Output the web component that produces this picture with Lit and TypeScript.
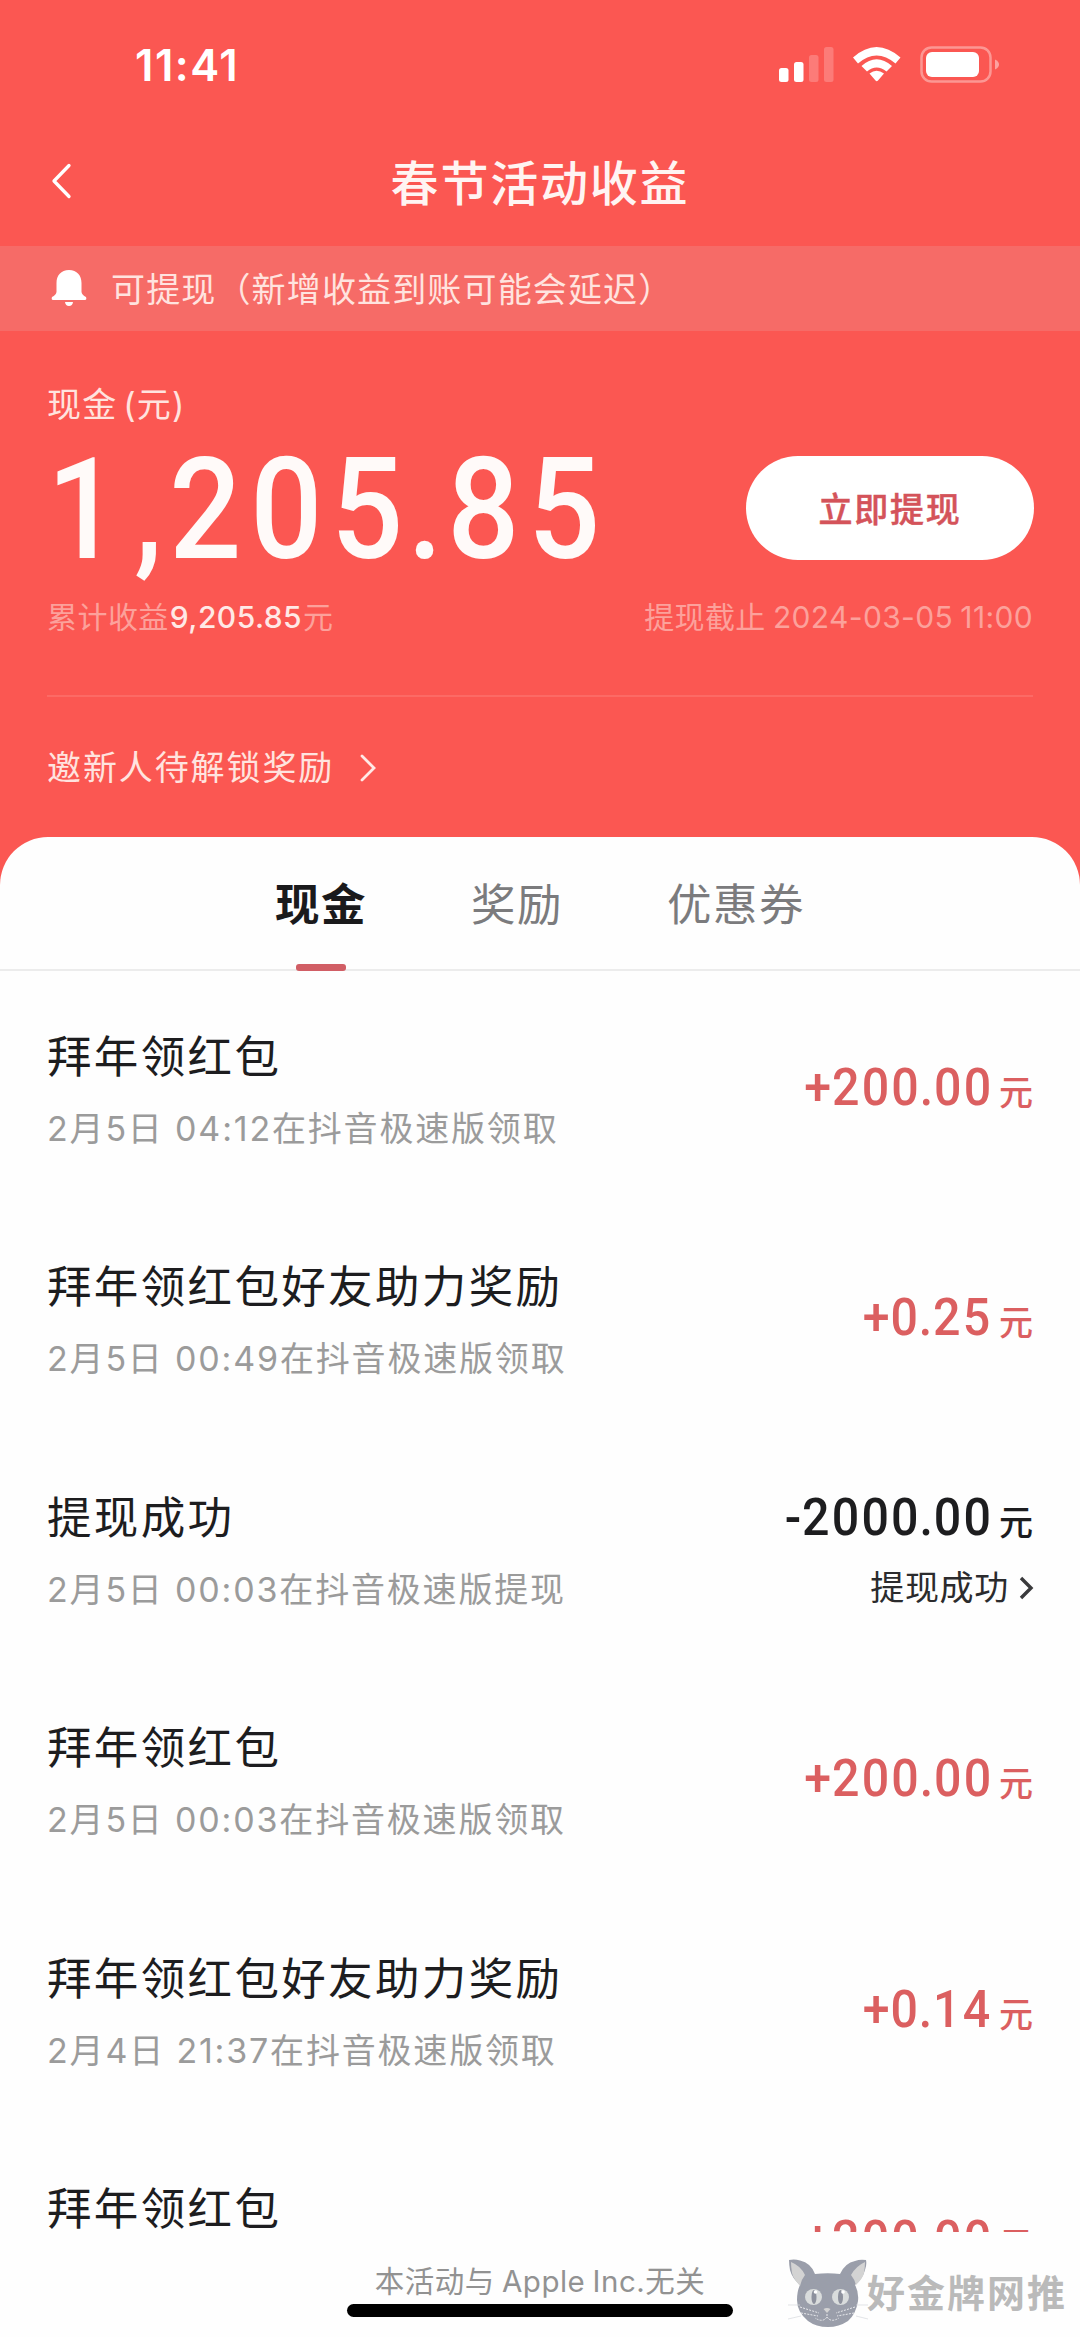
import { LitElement, html, css, svg, nothing } from "lit";
import { customElement, property } from "lit/decorators.js";

interface Entry {
  title: string;
  date: string;
  time: string;
  place: string;
  amount: string;
  status?: string;
}

const ENTRIES: Entry[] = [
  { title: "拜年领红包", date: "2月5日", time: "04:12", place: "在抖音极速版领取", amount: "+200.00" },
  { title: "拜年领红包好友助力奖励", date: "2月5日", time: "00:49", place: "在抖音极速版领取", amount: "+0.25" },
  { title: "提现成功", date: "2月5日", time: "00:03", place: "在抖音极速版提现", amount: "-2000.00", status: "提现成功" },
  { title: "拜年领红包", date: "2月5日", time: "00:03", place: "在抖音极速版领取", amount: "+200.00" },
  { title: "拜年领红包好友助力奖励", date: "2月4日", time: "21:37", place: "在抖音极速版领取", amount: "+0.14" },
  { title: "拜年领红包", date: "", time: "", place: "", amount: "+200.00" },
];

@customElement("status-bar")
export class StatusBar extends LitElement {
  static styles = css`
    :host { display: flex; justify-content: space-between; align-items: center; height: 131px; padding: 0 81px 2px 135px; box-sizing: border-box; }
    .time { font: 600 43.500px/50px Inter, sans-serif; letter-spacing: 1.500px; color: #fff; }
    .icons { display: block; width: 222px; height: 40px; }
  `;
  render() {
    return html`
      <span class="time">11:41</span>
      <svg class="icons" viewBox="776 44 222 40">
        <g fill="#fff">
          <rect x="778" y="67" width="9.5" height="14" rx="2.5" />
          <rect x="793" y="61" width="9.5" height="20" rx="2.5" />
          <rect x="808" y="54" width="9.5" height="27" rx="2.5" opacity=".22" />
          <rect x="823" y="46" width="9.5" height="35" rx="2.5" opacity=".22" />
          <path d="M852 56.5Q875.500 35.500 899.500 56.500L894.500 62.500Q875.500 46.500 857 62.500Z" />
          <path d="M860.500 65Q875.500 51.500 891 65L885.500 70.500Q875.500 62.500 866 70.500Z" />
          <path d="M868.500 72.500Q875.500 67 883 72.500L877 79.500Q875.700 81 874.500 79.500Z" />
          <rect x="925" y="51" width="53" height="25" rx="6" />
          <path d="M994 58.500Q998 60.500 998 63.500T994 68.500Z" opacity=".45" />
        </g>
        <rect x="920.500" y="46.500" width="69" height="34" rx="10" fill="none" stroke="#fff" stroke-width="2.500" opacity=".38" />
      </svg>
    `;
  }
}

@customElement("record-row")
export class RecordRow extends LitElement {
  @property({ attribute: false }) entry!: Entry;
  static styles = css`
    :host { display: flex; justify-content: space-between; height: 230.4px; padding: 0 47px 0 47px; box-sizing: border-box; font-family: Inter, "Noto Sans CJK SC", sans-serif; }
    .title { font-size: 44.500px; line-height: 60px; letter-spacing: 2.350px; color: #1d1d1f; margin-top: 56px; white-space: nowrap; }
    .sub { font-size: 34px; line-height: 48px; letter-spacing: 1.820px; color: #9b9b9b; margin-top: 18px; white-space: nowrap; }
    .side { display: flex; flex-direction: column; align-items: flex-end; padding-top: 87px; }
    .side.has-status { padding-top: 56px; }
    .sum { display: flex; align-items: baseline; gap: 6px; height: 60px; line-height: 60px; color: #db5f60; white-space: nowrap; }
    .has-status .sum { color: #1d1d1f; }
    .num { display: inline-block; font-family: Roboto, sans-serif; font-weight: 500; font-size: 52px; letter-spacing: 2.400px; transform: scaleX(.93); transform-origin: right; }
    .dot { margin: 0 -1.500px; }
    .sign { margin-right: -1.500px; }
    .unit { font-size: 34px; font-weight: 500; }
    .status { display: flex; align-items: center; gap: 9px; margin: 16px -1px 0 0; font-size: 34px; line-height: 48px; letter-spacing: .700px; color: #2b2b2d; }
    .chev { display: block; width: 16px; height: 26px; }
  `;
  render() {
    const e = this.entry;
    const [whole, cents] = e.amount.slice(1).split(".");
    return html`
      <div class="main">
        <div class="title">${e.title}</div>
        ${e.date ? html`<div class="sub">${e.date} ${e.time}${e.place}</div>` : nothing}
      </div>
      <div class="side ${e.status ? "has-status" : ""}">
        <div class="sum"><span class="num"><span class="sign">${e.amount[0]}</span>${whole}<span class="dot">.</span>${cents}</span><span class="unit">元</span></div>
        ${e.status
          ? html`<div class="status">${e.status}<svg class="chev" viewBox="0 0 16 26"><path d="M3 3L13 13L3 23" fill="none" stroke="#3a3a3c" stroke-width="3.400" /></svg></div>`
          : nothing}
      </div>
    `;
  }
}

const cat = svg`
  <path fill="#9a9eaa" d="M1 1Q7 0 12 1.500Q23 4 27 15Q40 13.500 52 15Q57 4 67 2Q72 0 78 1Q79 5 77 11Q75 19 67 26Q71 33 70 42Q68 55 60 62Q51 68 40 68Q28 68 20 62Q9 53 9 41Q9 32 12 26Q4 19 2 11Q1 5 1 1Z" />
  <path fill="#d3d3d3" d="M3 3Q13 7 17 16Q13 21 12 27Q5 19 4 14Q3 8 3 3ZM77 3Q68 7 63 16Q67 21 68 26Q75 19 76 14Q77 8 77 3Z" />
  <g fill="#d9dcdc"><ellipse cx="25.500" cy="38" rx="8.500" ry="8" /><ellipse cx="52.500" cy="38" rx="8.500" ry="8" /></g>
  <g fill="#8d919d"><ellipse cx="26" cy="38" rx="2.500" ry="7" /><ellipse cx="52.500" cy="38" rx="2.500" ry="7" /></g>
  <g fill="#fff"><circle cx="27.500" cy="33" r="1.800" /><circle cx="55" cy="33" r="1.800" /></g>
  <path fill="#d3d3d3" d="M35.500 50Q39 48 42.500 50L39 54Z" />
  <path fill="none" stroke="#e8e9ec" stroke-width="1" stroke-dasharray="2 1.200" d="M39 55V58Q35 64 27 59M39 58Q43 64 51 59M12 48L31 54M13 54L30 57M67 48L48 54M66 54L49 57" />
  <path fill="none" stroke="#d6d8dc" stroke-width=".700" d="M0 46H12M0 60L13 57M68 46H80M68 57L80 60" />
`;

@customElement("app-root")
export class AppRoot extends LitElement {
  static styles = css`
    :host { display: flex; flex-direction: column; position: relative; width: 1080px; height: 2337px; overflow: hidden; background: #fb5752; font-family: Inter, "Noto Sans CJK SC", sans-serif; }
    svg { display: block; }
    .nav { display: grid; grid-template-columns: 90px 1fr 90px; align-items: center; height: 106px; padding-bottom: 9px; }
    .back { width: 24px; height: 40px; margin: 0 0 6px 48px; }
    .title { text-align: center; font-size: 48px; font-weight: 500; line-height: 60px; letter-spacing: 1.800px; color: #fff4f2; }
    .notice { display: flex; align-items: center; height: 85px; padding: 0 0 2px 51px; box-sizing: border-box; gap: 24px; background: #f66b67; color: #ffe3df; font-size: 34px; letter-spacing: 1.150px; }
    .bell { width: 36px; height: 38px; }
    .hero { display: flex; flex-direction: column; height: 506px; padding: 0 47px 0 47px; box-sizing: border-box; }
    .label { margin-top: 50px; font-size: 34px; line-height: 48px; letter-spacing: 1.200px; word-spacing: -5px; color: #ffe3df; }
    .balance { display: flex; justify-content: space-between; align-items: center; height: 104px; margin-top: 27px; }
    .amount { font: 500 141px/104px Roboto, sans-serif; letter-spacing: 9.800px; color: #fffaf9; transform: scaleX(.9); transform-origin: left; padding-top: 4px; }
    .comma { margin: 0 -2.500px 0 7px; }
    .point { margin: 0 -5px; }
    .cta { display: flex; align-items: center; justify-content: center; width: 288px; height: 104px; border-radius: 52px; border: 0; padding: 0 0 2px; background: #fff; color: #d4535a; -webkit-text-stroke: .5px #d4535a; font: 500 34px "Noto Sans CJK SC", sans-serif; letter-spacing: 1.700px; margin-right: -1px; }
    .meta { display: flex; justify-content: space-between; align-items: center; margin-top: 33px; font-size: 30px; line-height: 48px; letter-spacing: .350px; word-spacing: -1.500px; color: #fca19b; }
    .sum { letter-spacing: .450px; }
    .total { color: #ffe9e6; font-weight: 500; margin: 0 1px; }
    .rule { height: 2px; margin-top: 54px; background: #fc6a65; }
    .invite { display: flex; align-items: center; gap: 25px; margin-top: 47px; font-size: 34px; line-height: 48px; letter-spacing: 1.900px; color: #ffe3df; }
    .go { width: 20px; height: 30px; }
    .sheet { display: flex; flex-direction: column; flex: 1; border-radius: 48px 48px 0 0; background: #fefefe; overflow: hidden; }
    .tabs { display: flex; justify-content: center; gap: 104px; height: 134px; box-sizing: border-box; border-bottom: 2px solid #ececec; }
    .tab { display: flex; flex-direction: column; align-items: center; justify-content: space-between; height: 134px; padding-top: 38px; box-sizing: border-box; font-size: 44.500px; line-height: 60px; letter-spacing: 1.500px; color: #7b7b7d; }
    .tab.on { color: #1a1a1c; font-weight: 700; }
    .bar { width: 50px; height: 7px; border-radius: 3px; background: #d15e65; }
    .list { height: 1261px; overflow: hidden; }
    .foot { display: flex; flex-direction: column; align-items: center; padding-top: 26px; }
    .legal { font-size: 29.500px; line-height: 46px; letter-spacing: .500px; word-spacing: -1.500px; color: #929292; }
    .home { width: 386px; height: 13px; border-radius: 7px; background: #000; }
    .mark { position: absolute; left: 788px; top: 2259px; display: flex; align-items: flex-start; }
    .cat { width: 80px; height: 69px; }
    .brand { font: 700 38px/60px "Noto Sans CJK SC", sans-serif; letter-spacing: 2px; color: #bababa; margin: 2px 0 0 -1px; }
  `;
  render() {
    return html`
      <status-bar></status-bar>
      <div class="nav">
        <svg class="back" viewBox="0 0 24 40"><path d="M21 4.500L6 20L21 35.500" fill="none" stroke="#fff" stroke-width="3.300" stroke-linecap="round" stroke-linejoin="round" /></svg>
        <div class="title">春节活动收益</div>
      </div>
      <div class="notice">
        <svg class="bell" viewBox="0 0 36 38"><path fill="#fff" d="M18 1C26 1 30.500 6.500 30.500 14V23Q31 26 35 28Q36 31 34 31H2Q0 31 1 28Q5 26 5.500 23V14C5.500 6.500 10 1 18 1ZM14 33H22Q21.500 37 18 37T14 33Z" /></svg>
        <span>可提现（新增收益到账可能会延迟）</span>
      </div>
      <div class="hero">
        <div class="label">现金 (元)</div>
        <div class="balance"><div class="amount">1<span class="comma">,</span>205<span class="point">.</span>85</div><button class="cta">立即提现</button></div>
        <div class="meta"><div class="sum">累计收益<span class="total">9,205.85</span>元</div><div>提现截止 2024-03-05 11:00</div></div>
        <div class="rule"></div>
        <div class="invite"><span>邀新人待解锁奖励</span><svg class="go" viewBox="0 0 20 30"><path d="M3 3L15 15L3 27" fill="none" stroke="#ffe9e6" stroke-width="2.800" stroke-linecap="round" /></svg></div>
      </div>
      <div class="sheet">
        <div class="tabs">
          <div class="tab on"><span>现金</span><i class="bar"></i></div>
          <div class="tab"><span>奖励</span></div>
          <div class="tab"><span>优惠券</span></div>
        </div>
        <div class="list">${ENTRIES.map((e) => html`<record-row .entry=${e}></record-row>`)}</div>
        <div class="foot"><div class="legal">本活动与 Apple Inc.无关</div><div class="home"></div></div>
      </div>
      <div class="mark"><svg class="cat" viewBox="0 0 80 69">${cat}</svg><span class="brand">好金牌网推</span></div>
    `;
  }
}
